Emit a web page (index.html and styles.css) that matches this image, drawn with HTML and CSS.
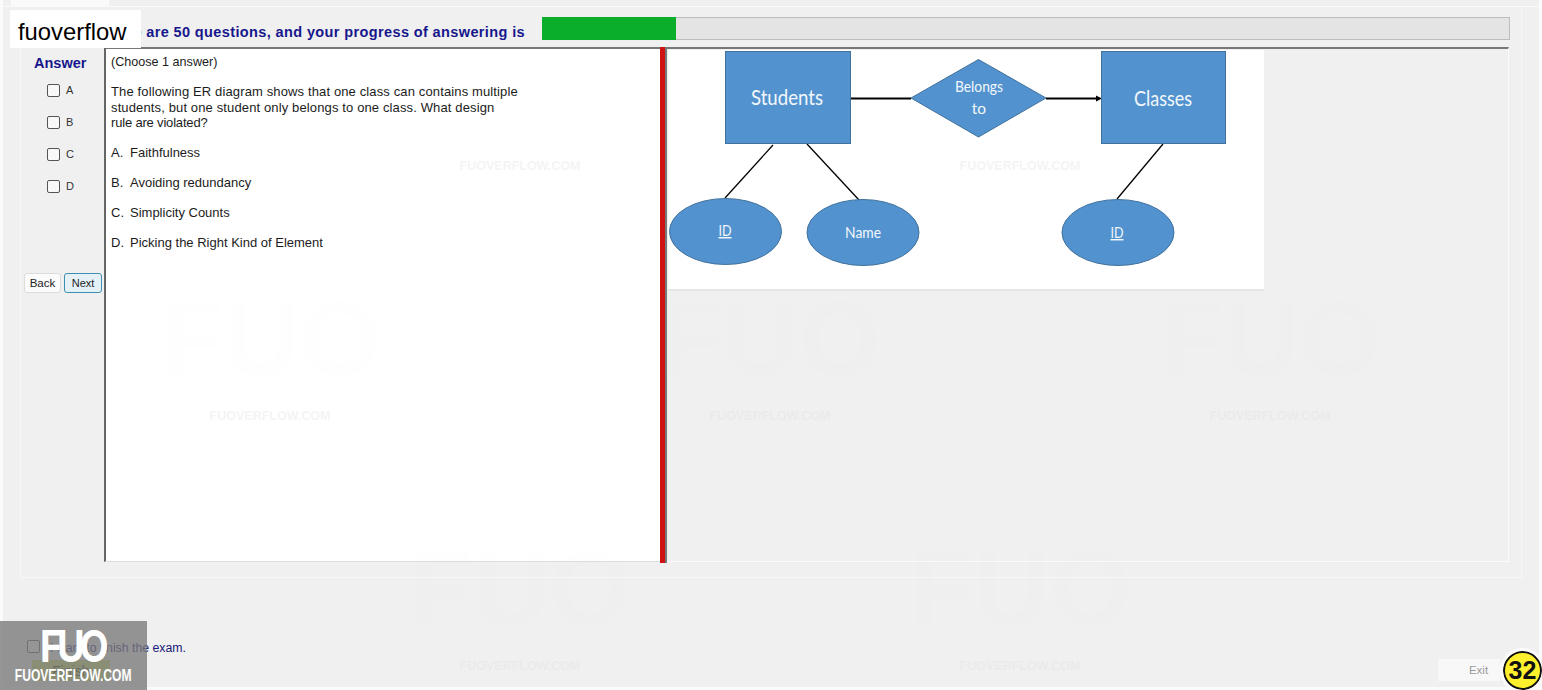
FILE: index.html
```html
<!DOCTYPE html>
<html lang="en">
<head>
<meta charset="utf-8">
<title>Exam</title>
<link rel="stylesheet" href="styles.css">
</head>
<body>
<div class="app">
  <div class="tabstrip"><div class="tab"></div></div>
  <section class="group">
    <header class="head">
      <div class="title">There are 50 questions, and your progress of answering is</div>
      <div class="progress"><div class="progress-fill"></div></div>
    </header>
    <main class="main">
      <aside class="answers">
        <div class="answers-title">Answer</div>
        <label class="opt"><span class="box"></span>A</label>
        <label class="opt"><span class="box"></span>B</label>
        <label class="opt"><span class="box"></span>C</label>
        <label class="opt"><span class="box"></span>D</label>
        <div class="navs">
          <button class="btn">Back</button>
          <button class="btn btn-on">Next</button>
        </div>
      </aside>
      <article class="question">
        <p class="q-choose">(Choose 1 answer)</p>
        <p class="q-text">The following ER diagram shows that one class can contains multiple<br>students, but one student only belongs to one class. What design<br><span class="tight">rule are violated?</span></p>
        <p class="q-opt"><span class="q-key">A.</span>Faithfulness</p>
        <p class="q-opt"><span class="q-key">B.</span>Avoiding redundancy</p>
        <p class="q-opt"><span class="q-key">C.</span>Simplicity Counts</p>
        <p class="q-opt"><span class="q-key">D.</span>Picking the Right Kind of Element</p>
      </article>
      <div class="splitter"></div>
      <div class="figure">
        <svg class="er" width="596" height="239" viewBox="668 50 596 239" xmlns="http://www.w3.org/2000/svg">
          <g class="er-line">
            <line x1="851" y1="98.500" x2="911" y2="98.500" class="er-thick"/>
            <line x1="1046" y1="98.500" x2="1096" y2="98.500" class="er-thick"/>
            <line x1="773" y1="145" x2="725" y2="198"/>
            <line x1="807" y1="144" x2="859" y2="200"/>
            <line x1="1163" y1="144" x2="1117" y2="199"/>
          </g>
          <path class="er-arrow" d="M1096 95.500 L1102 98.500 L1096 101.500 Z"/>
          <rect class="er-shape" x="725.500" y="51.500" width="125" height="92"/>
          <rect class="er-shape" x="1101.500" y="51.500" width="124" height="92"/>
          <path class="er-shape" d="M978.500 59.500 L1046 98 L978.500 137 L911 98 Z"/>
          <ellipse class="er-shape" cx="725.500" cy="231.500" rx="56" ry="33"/>
          <ellipse class="er-shape" cx="863" cy="232.500" rx="56" ry="33"/>
          <ellipse class="er-shape" cx="1118" cy="232.500" rx="56" ry="33"/>
          <text class="er-big" x="787" y="105" textLength="72" lengthAdjust="spacingAndGlyphs">Students</text>
          <text class="er-big" x="1163" y="106" textLength="58" lengthAdjust="spacingAndGlyphs">Classes</text>
          <text class="er-mid" x="979" y="92" textLength="48" lengthAdjust="spacingAndGlyphs">Belongs</text>
          <text class="er-mid" x="979" y="114">to</text>
          <text class="er-small er-u" x="725" y="236" textLength="13" lengthAdjust="spacingAndGlyphs">ID</text>
          <text class="er-small" x="863" y="238" textLength="36" lengthAdjust="spacingAndGlyphs">Name</text>
          <text class="er-small er-u" x="1117" y="238" textLength="13" lengthAdjust="spacingAndGlyphs">ID</text>
        </svg>
      </div>
    </main>
  </section>
  <footer class="foot">
    <div class="foot-left">
      <label class="finish-check"><span class="box"></span>I want to finish the exam.</label>
      <button class="finish">Finish</button>
    </div>
    <button class="exit">Exit</button>
  </footer>
</div>

<div class="marks" aria-hidden="true">
  <div></div><div class="mark">FUOVERFLOW.COM</div><div></div><div class="mark">FUOVERFLOW.COM</div><div></div>
  <div class="mark"><b class="mark-big">FUO</b>FUOVERFLOW.COM</div><div></div><div class="mark"><b class="mark-big">FUO</b>FUOVERFLOW.COM</div><div></div><div class="mark"><b class="mark-big">FUO</b>FUOVERFLOW.COM</div>
  <div></div><div class="mark"><b class="mark-big">FUO</b>FUOVERFLOW.COM</div><div></div><div class="mark"><b class="mark-big">FUO</b>FUOVERFLOW.COM</div><div></div>
</div>

<div class="brand">fuoverflow</div>
<div class="logo">
  <div class="logo-mark">FUO</div>
  <div class="logo-text"><span class="logo-squeeze">FUOVERFLOW.COM</span></div>
</div>
<div class="badge">32</div>
</body>
</html>
```

FILE: styles.css
```css
* { box-sizing: border-box; }
html, body { margin: 0; height: 690px; overflow: hidden; }
body { background: #fbfbfb; font-family: "Liberation Sans", Arial, sans-serif; font-size: 12px; color: #1c1c1c; }
.app { margin-left: 3px; width: 1536px; height: 687px; background: #f0f0f0; display: flex; flex-direction: column; }
.tabstrip { height: 7px; border-bottom: 1px solid #fafafa; padding-left: 8px; }
.tab { width: 98px; height: 6px; background: #fafafa; }
.group { margin-left: 17px; width: 1502px; height: 571px; border: 1px solid #f7f7f7; border-top: 0; padding: 10px 0 0 3px; display: flex; flex-direction: column; }
.head { height: 30px; display: flex; align-items: flex-start; }
.title { width: 501px; height: 23px; line-height: 30px; text-align: right; font-size: 14.500px; font-weight: bold; color: #17178c; white-space: nowrap; letter-spacing: .38px; }
.progress { margin-left: 17px; width: 968px; height: 23px; background: #e4e4e4; border: 1px solid #bdbdbd; border-left: 0; }
.progress-fill { width: 134px; height: 23px; background: #0bae2b; margin-top: -1px; }
.main { width: 1485px; height: 515px; display: flex; }
.answers { width: 80px; display: flex; flex-direction: column; }
.answers-title { height: 34px; padding: 8px 0 0 10px; font-size: 14.500px; font-weight: bold; color: #17178c; }
.opt { height: 32px; padding: 3px 0 0 23px; display: flex; gap: 6px; font-size: 11px; color: #333; }
.box { display: block; flex: none; width: 13px; height: 13px; border: 1px solid #555; border-radius: 2px; background: #f8f8f8; }
.navs { margin-top: 64px; display: flex; gap: 3px; }
.btn { width: 37px; height: 20px; padding: 0; font: 11.500px "Liberation Sans", Arial, sans-serif; color: #222; background: #fbfbfb; border: 1px solid #dcdcdc; border-radius: 3px; }
.btn-on { width: 38px; background: #e4f1f7; border-color: #3f8fb3; font-size: 11px; }
.question { width: 556px; background: #fff; border-left: 2px solid #666; border-top: 2px solid #777; border-bottom: 1px solid #ddd; padding: 5px 0 0 5px; font-size: 13px; }
.question p { margin: 0; }
.question .q-choose { line-height: 16px; margin-bottom: 14px; font-size: 12.600px; }
.q-text { line-height: 15.500px; letter-spacing: .13px; white-space: nowrap; }
.tight { letter-spacing: -.18px; }
.question .q-opt { margin-top: 14px; line-height: 16px; display: flex; }
.q-key { width: 19px; }
.splitter { width: 7px; height: 516px; background: #cf1313; border-right: 2px solid #777; margin-bottom: -1px; }
.figure { width: 842px; height: 515px; border-top: 2px solid #777; border-right: 1px solid #fafafa; border-bottom: 1px solid #fafafa; padding-top: 1px; }
.er { display: block; background: #fff; border-bottom: 2px solid #e6e6e6; box-sizing: content-box; margin-left: 1px; }
.er-line line { stroke: #000; stroke-width: 1.300; }
.er-line .er-thick { stroke-width: 2; }
.er-arrow { fill: #000; }
.er-shape { fill: #5293cf; stroke: #41719c; stroke-width: 1; }
.er text { fill: #f2f7fb; font-family: Lato, "Open Sans", sans-serif; text-anchor: middle; }
.er-big { font-size: 21px; }
.er-mid { font-size: 15.500px; }
.er-small { font-size: 14.500px; }
.er-u { text-decoration: underline; }
.foot { flex: 1; display: flex; justify-content: space-between; align-items: flex-end; padding: 0 39px 6px 24px; }
.foot-left { display: flex; flex-direction: column; gap: 4px; }
.finish-check { display: flex; gap: 10px; font-size: 12.300px; line-height: 16px; color: #1a1a7a; }
.finish { width: 78px; height: 21px; margin-left: 5px; padding: 0; border: 0; background: #c6d86a; color: #3a3a20; font: 14px "Liberation Sans", Arial, sans-serif; }
.exit { width: 62px; height: 22px; padding: 0 0 0 19px; border: 0; background: #f8f8f8; color: #9a9a9a; font: 11.500px "Liberation Sans", Arial, sans-serif; }
.marks { position: absolute; left: 145px; top: 0; display: grid; grid-template-columns: repeat(5, 250px); grid-template-rows: 174px 250px 250px; pointer-events: none; }
.mark { display: flex; flex-direction: column; justify-content: flex-end; align-items: center; font-size: 12.500px; line-height: 16px; font-weight: bold; color: rgba(226, 226, 226, .38); white-space: nowrap; }
.mark-big { font-size: 105px; line-height: 110px; margin-bottom: 14px; color: rgba(226, 226, 226, .05); }
.brand { position: absolute; left: 10px; top: 10px; width: 131px; height: 38px; padding-left: 8px; background: #fff; color: #000; font-size: 23.800px; line-height: 43px; }
.logo { position: absolute; left: 0; top: 621px; width: 147px; height: 69px; background: rgba(120, 120, 120, .78); color: #fff; font-weight: bold; text-align: center; }
.logo-mark { height: 45px; padding-top: 1px; font-family: Inter, "Liberation Sans", sans-serif; font-size: 44px; font-weight: 700; line-height: 48px; letter-spacing: -6px; transform: scaleX(.86); padding-right: 4px; }
.logo-text { display: flex; justify-content: center; font-size: 17px; line-height: 20px; white-space: nowrap; }
.logo-squeeze { flex: none; transform: scaleX(.71); }
.badge { position: absolute; left: 1503px; top: 651px; width: 39px; height: 39px; border-radius: 50%; border: 2px solid #111; outline: 3px solid #fbfbfb; background: #fff02e; color: #111; font-weight: bold; font-size: 25px; line-height: 35px; text-align: center; }
```
